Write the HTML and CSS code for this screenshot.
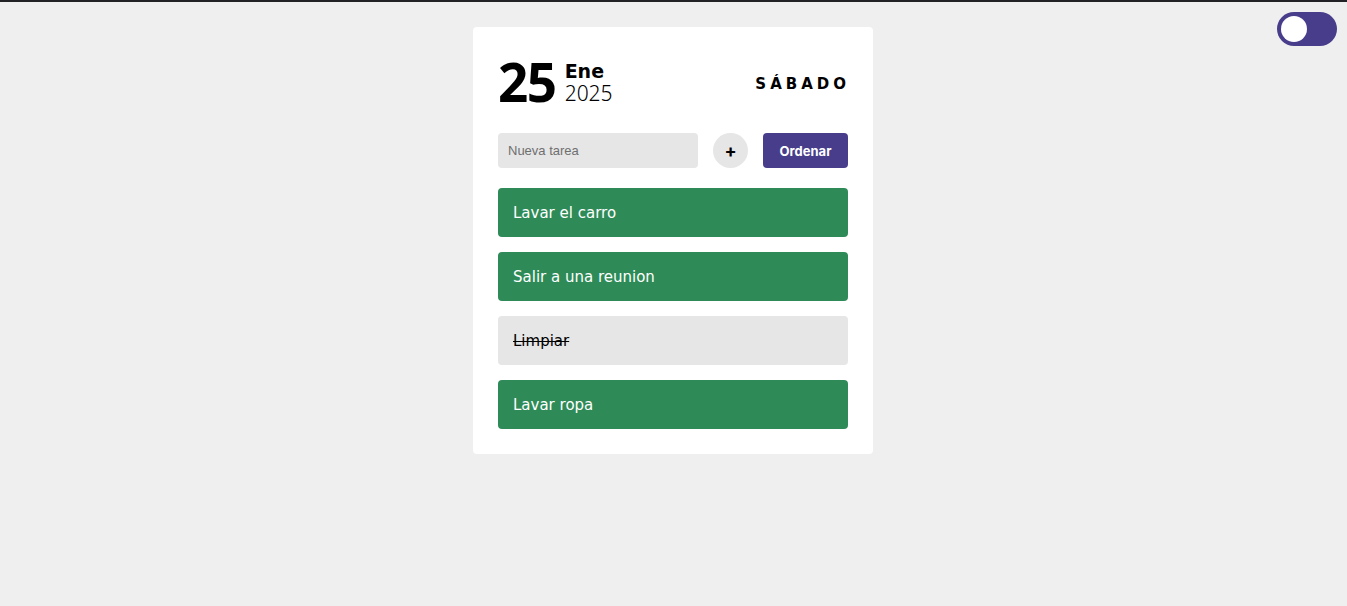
FILE: index.html
```html
<!DOCTYPE html>
<html lang="es">
<head>
<meta charset="utf-8">
<title>Tareas</title>
<link rel="stylesheet" href="styles.css">
</head>
<body>
<div class="topbar"></div>
<label class="toggle"><span class="knob"></span></label>
<main class="page">
  <section class="card">
    <header class="date">
      <div class="date-left">
        <span class="day">25</span>
        <div class="month-year">
          <span class="month">Ene</span>
          <span class="year">2025</span>
        </div>
      </div>
      <span class="weekday">SÁBADO</span>
    </header>
    <form class="controls">
      <input class="new-task" type="text" placeholder="Nueva tarea">
      <button type="button" class="add">+</button>
      <button type="button" class="sort">Ordenar</button>
    </form>
    <ul class="tasks">
      <li class="task">Lavar el carro</li>
      <li class="task">Salir a una reunion</li>
      <li class="task done">Limpiar</li>
      <li class="task">Lavar ropa</li>
    </ul>
  </section>
</main>
</body>
</html>
```
FILE: styles.css
```css
* { box-sizing: border-box; }
html, body { margin: 0; padding: 0; }
body {
  background: #efefef;
  font-family: "DejaVu Sans", "Open Sans", sans-serif;
  min-height: 606px;
}
.topbar { height: 2px; background: #222226; }
.toggle {
  position: absolute;
  top: 12px;
  right: 10px;
  width: 60px;
  height: 34px;
  border-radius: 17px;
  background: #483d8b;
}
.toggle .knob {
  position: absolute;
  left: 4px;
  top: 4px;
  width: 26px;
  height: 26px;
  border-radius: 50%;
  background: #fff;
}
.page {
  display: flex;
  justify-content: center;
  padding-top: 25px;
  padding-right: 1px;
}
.card {
  width: 400px;
  background: #fff;
  border-radius: 4px;
  padding: 25px;
}
.date {
  display: flex;
  justify-content: space-between;
  align-items: center;
  height: 58px;
  margin-bottom: 23px;
}
.date-left { display: flex; align-items: center; }
.day {
  font-family: "Noto Sans", sans-serif;
  font-size: 53px;
  font-weight: 700;
  letter-spacing: -1.5px;
  line-height: 1;
  margin-right: 9px;
}
.month-year { display: flex; flex-direction: column; line-height: 1.15; padding-top: 4px; }
.month { font-size: 19px; font-weight: 700; }
.year { font-size: 21px; font-weight: 300; font-family: "Noto Sans", sans-serif; line-height: 1.1; }
.weekday {
  font-size: 15px;
  font-weight: 700;
  letter-spacing: 4px;
  margin-right: -2px;
  padding-top: 5px;
}
.controls {
  display: flex;
  align-items: center;
  margin-bottom: 20px;
}
.new-task {
  width: 200px;
  height: 35px;
  border: none;
  border-radius: 4px;
  background: #e6e6e6;
  padding: 0 10px;
  font-family: "Liberation Sans", Arial, sans-serif;
  font-size: 13px;
  outline: none;
}
.new-task::placeholder { color: #6f6f6f; }
.add {
  margin-left: 15px;
  width: 35px;
  height: 35px;
  border: none;
  border-radius: 50%;
  background: #e6e6e6;
  font-family: "Inter", sans-serif;
  font-size: 18px;
  font-weight: 700;
  padding: 0;
  color: #000;
}
.sort {
  margin-left: 15px;
  width: 85px;
  height: 35px;
  border: none;
  border-radius: 4px;
  background: #483d8b;
  color: #fff;
  font-family: "Inter", sans-serif;
  font-weight: 700;
  font-size: 13px;
  padding: 0;
}
.tasks {
  list-style: none;
  margin: 0;
  padding: 0;
  display: flex;
  flex-direction: column;
  gap: 15px;
}
.task {
  height: 49px;
  display: flex;
  align-items: center;
  padding-left: 15px;
  border-radius: 4px;
  background: #2e8b57;
  color: #fff;
  font-size: 15px;
}
.task.done {
  background: #e6e6e6;
  color: #000;
  text-decoration: line-through;
}
```
